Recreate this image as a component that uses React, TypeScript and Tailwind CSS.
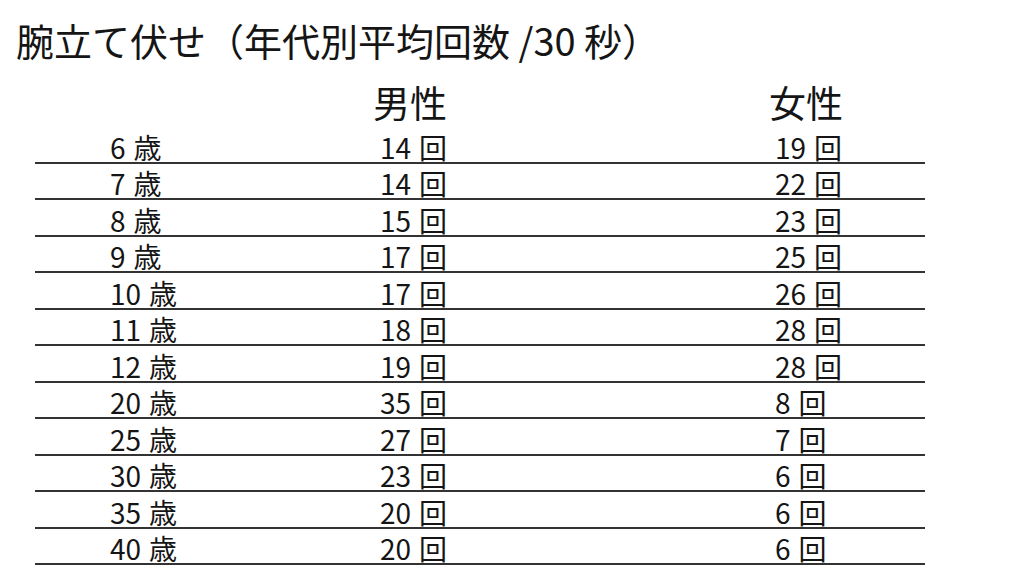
const rows: [number, number, number][] = [
  [6, 14, 19],
  [7, 14, 22],
  [8, 15, 23],
  [9, 17, 25],
  [10, 17, 26],
  [11, 18, 28],
  [12, 19, 28],
  [20, 35, 8],
  [25, 27, 7],
  [30, 23, 6],
  [35, 20, 6],
  [40, 20, 6],
];

function Cell({ n, unit }: { n: number; unit: string }) {
  return (
    <span>
      {n}
      <span className="ml-[8px]">{unit}</span>
    </span>
  );
}

export default function App() {
  return (
    <div
      className="w-[1024px] h-[576px] overflow-hidden bg-white text-[#151515]"
      style={{ fontFamily: '"Noto Sans CJK JP", "Noto Sans", sans-serif' }}
    >
      <h1 className="pl-[16px] pt-[17px] text-[38px] leading-[46px] font-normal">
        腕立て伏せ（年代別平均回数 /30 秒）
      </h1>

      <div className="ml-[35px] w-[890px]">
        {/* header */}
        <div className="flex h-[64px] items-end pb-[6px] text-[37px] leading-none">
          <div className="w-[338px]" />
          <div className="w-[396px]">男性</div>
          <div>女性</div>
        </div>

        {rows.map(([age, male, female]) => (
          <div
            key={age}
            className="flex h-[36.5px] items-end border-b-2 border-[#333] pb-[1px] text-[28px] leading-none"
          >
            <div className="w-[345px] pl-[75px]">
              <Cell n={age} unit="歳" />
            </div>
            <div className="w-[395px]">
              <Cell n={male} unit="回" />
            </div>
            <div>
              <Cell n={female} unit="回" />
            </div>
          </div>
        ))}
      </div>
    </div>
  );
}
